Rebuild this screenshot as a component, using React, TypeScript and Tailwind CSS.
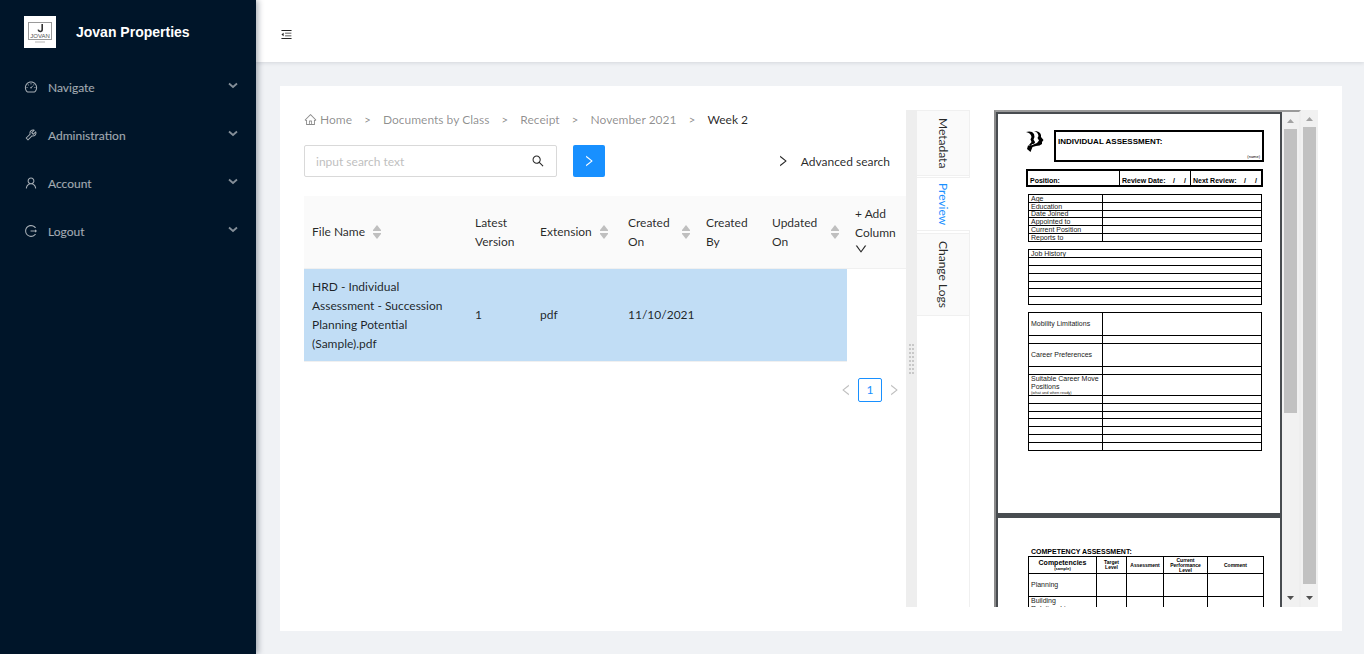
import type { ReactNode } from "react";
import {
  AiOutlineDashboard,
  AiOutlineDown,
  AiOutlineHome,
  AiOutlineLeft,
  AiOutlineLogout,
  AiOutlineMenuFold,
  AiOutlineRight,
  AiOutlineSearch,
  AiOutlineTool,
  AiOutlineUser,
} from "react-icons/ai";

const MENU = [
  { label: "Navigate", Icon: AiOutlineDashboard },
  { label: "Administration", Icon: AiOutlineTool },
  { label: "Account", Icon: AiOutlineUser },
  { label: "Logout", Icon: AiOutlineLogout },
];

const CRUMBS = ["Home", "Documents by Class", "Receipt", "November 2021", "Week 2"];

const COLUMNS = [
  { title: "File Name", width: "w-[163px]", sort: true },
  { title: "Latest Version", width: "w-[65px]", sort: false },
  { title: "Extension", width: "w-[88px]", sort: true },
  { title: "Created On", width: "w-[78px]", sort: true },
  { title: "Created By", width: "w-[66px]", sort: false },
  { title: "Updated On", width: "w-[83px]", sort: true },
];

const FILE = [
  "HRD - Individual Assessment - Succession Planning Potential (Sample).pdf",
  "1",
  "pdf",
  "11/10/2021",
  "",
  "",
];

function BrandLogo() {
  return (
    <svg viewBox="0 0 32 32" className="h-8 w-8 shrink-0 bg-white" aria-hidden="true">
      <rect x="4.5" y="6.5" width="23" height="17" fill="none" stroke="#9a9a9a" />
      <path d="M18.200 8v5.500q0 2-2 2-1.700 0-2-1.800" fill="none" stroke="#333" strokeWidth="1.6" />
      <text
        x="16"
        y="21.5"
        textAnchor="middle"
        fontSize="6"
        fill="#555"
        fontFamily="Liberation Sans, sans-serif"
      >
        JOVAN
      </text>
      <path d="M11 26h10" stroke="#b5b5b5" strokeWidth="1" />
    </svg>
  );
}

function Sidebar() {
  return (
    <aside className="z-10 w-64 shrink-0 bg-[#001529] shadow-[2px_0_6px_rgba(0,21,41,0.35)]">
      <div className="flex h-[63px] items-center gap-5 px-6">
        <BrandLogo />
        <h1 className="font-['Liberation_Sans',sans-serif] text-sm font-bold text-white">
          Jovan Properties
        </h1>
      </div>
      <nav>
        {MENU.map(({ label, Icon }) => (
          <button
            key={label}
            type="button"
            className="flex h-12 w-full items-center pr-4 pl-6 text-white/65"
          >
            <Icon className="mr-2.5 shrink-0" size={14} />
            <span>{label}</span>
            <svg viewBox="0 0 14 14" className="ml-auto h-3.5 w-3.5 opacity-80" aria-hidden="true">
              <path d="M3 3.500l4 3.500 4-3.500" fill="none" stroke="currentColor" strokeWidth="1.8" />
            </svg>
          </button>
        ))}
      </nav>
    </aside>
  );
}

function Sorter() {
  return (
    <svg viewBox="0 0 8 14" className="h-3.5 w-2 shrink-0 fill-[#bfbfbf]" aria-hidden="true">
      <path d="M4 0l4 5v1H0V5z" />
      <path d="M4 14l4-5V8H0v1z" />
    </svg>
  );
}

function Breadcrumb() {
  return (
    <nav aria-label="Breadcrumb">
      <ol className="flex gap-3 text-black/45">
        {CRUMBS.map((crumb, i) => (
          <li key={crumb} className="flex items-center gap-3">
            {i > 0 && <span>&gt;</span>}
            {i === CRUMBS.length - 1 ? (
              <span className="text-black/85">{crumb}</span>
            ) : (
              <a href="#" className="flex items-center gap-[3px]">
                {i === 0 && <AiOutlineHome size={13} />}
                {crumb}
              </a>
            )}
          </li>
        ))}
      </ol>
    </nav>
  );
}

function SearchBar() {
  return (
    <div className="mt-4 flex items-center">
      <label className="flex h-8 w-[253px] items-center rounded-[2px] border border-[#d9d9d9] px-[11px]">
        <input
          type="text"
          aria-label="Search documents"
          placeholder="input search text"
          className="min-w-0 flex-1 outline-none placeholder:text-[#bfbfbf]"
        />
        <AiOutlineSearch size={14} />
      </label>
      <button
        type="button"
        aria-label="Search"
        className="ml-4 flex h-8 w-8 items-center justify-center rounded-[2px] bg-[#1890ff] text-white"
      >
        <AiOutlineRight size={14} />
      </button>
      <button type="button" className="mr-4 ml-auto flex items-center gap-[11px]">
        <AiOutlineRight size={14} />
        Advanced search
      </button>
    </div>
  );
}

function FileTable() {
  return (
    <table className="mt-[19px] w-full table-fixed text-left">
      <colgroup>
        {COLUMNS.map((c) => (
          <col key={c.title} className={c.width} />
        ))}
        <col className="w-[59px]" />
      </colgroup>
      <thead className="bg-[#fafafa]">
        <tr className="h-[72px] border-b border-[#f0f0f0]">
          {COLUMNS.map((c) => (
            <th key={c.title} className="px-2 font-normal">
              <span className="flex items-center gap-2">
                {c.title}
                {c.sort && <Sorter />}
              </span>
            </th>
          ))}
          <th className="pl-2 font-normal">
            <button type="button" className="text-left">
              + Add Column
              <AiOutlineDown size={14} className="-ml-px mb-1" />
            </button>
          </th>
        </tr>
      </thead>
      <tbody>
        <tr>
          {FILE.map((value, i) => (
            <td key={i} className="border-b border-[#f0f0f0] bg-[#c1ddf5] px-2 py-2">
              {value}
            </td>
          ))}
          <td />
        </tr>
      </tbody>
    </table>
  );
}

function Pagination() {
  return (
    <div className="mt-4 flex justify-end text-[#bfbfbf]">
      <button type="button" aria-label="Previous page" className="flex h-6 w-6 items-center justify-center">
        <AiOutlineLeft size={14} />
      </button>
      <button
        type="button"
        className="h-6 w-6 rounded-[2px] border border-[#1890ff] text-center text-[#1890ff]"
      >
        1
      </button>
      <button type="button" aria-label="Next page" className="flex h-6 w-6 items-center justify-center">
        <AiOutlineRight size={14} />
      </button>
    </div>
  );
}

function Splitter() {
  return (
    <div className="flex w-[11px] shrink-0 items-center justify-center bg-[#eeeeee]">
      <div className="grid grid-cols-2 gap-x-px gap-y-0.5">
        {Array.from({ length: 16 }, (_, i) => (
          <span key={i} className="h-0.5 w-0.5 bg-[#c8c8c8]" />
        ))}
      </div>
    </div>
  );
}

function DetailTabs() {
  const tab =
    "flex w-full items-center justify-center border-y border-r border-[#f0f0f0] bg-[#fafafa]";
  return (
    <div role="tablist" className="flex w-[53px] shrink-0 flex-col">
      <button type="button" role="tab" className={`${tab} h-[66px]`}>
        <span className="whitespace-nowrap [writing-mode:vertical-rl]">Metadata</span>
      </button>
      <div className="h-px border-r border-[#f0f0f0]" />
      <button
        type="button"
        role="tab"
        aria-selected="true"
        className="flex h-[54px] w-full items-center justify-center border-y border-[#f0f0f0] text-[#1890ff]"
      >
        <span className="whitespace-nowrap [writing-mode:vertical-rl]">Preview</span>
      </button>
      <div className="h-0.5 border-r border-[#f0f0f0]" />
      <button type="button" role="tab" className={`${tab} h-[83px]`}>
        <span className="whitespace-nowrap [writing-mode:vertical-rl]">Change Logs</span>
      </button>
      <div className="flex-1 border-r border-[#f0f0f0]" />
    </div>
  );
}

function Scrollbar({ thumb }: { thumb: string }) {
  return (
    <div className="flex w-[17px] shrink-0 flex-col items-center bg-[#f1f1f1]">
      <svg viewBox="0 0 17 17" className="h-[17px] w-[17px] shrink-0 fill-[#a3a3a3]" aria-hidden="true">
        <path d="M5 11l3.500-4 3.500 4z" />
      </svg>
      <div className="w-[13px] flex-1">
        <div className={`bg-[#c1c1c1] ${thumb}`} />
      </div>
      <svg viewBox="0 0 17 17" className="h-[17px] w-[17px] shrink-0 fill-[#505050]" aria-hidden="true">
        <path d="M5 6h7l-3.500 4z" />
      </svg>
    </div>
  );
}

function SheetTable({ rows, split = true }: { rows: [string, ReactNode?][]; split?: boolean }) {
  return (
    <table className="w-[234px] table-fixed border-collapse leading-[6px]">
      <colgroup>
        <col className="w-[74px]" />
        {split && <col />}
      </colgroup>
      <tbody>
        {rows.map(([height, label], i) => (
          <tr key={i} className={height}>
            <td className="border border-black pl-0.5 align-middle">{label}</td>
            {split && <td className="border border-black" />}
          </tr>
        ))}
      </tbody>
    </table>
  );
}

function ReviewDate({ label }: { label: string }) {
  return (
    <p className="flex flex-1 items-end justify-between border-l border-black pr-1 pb-px pl-0.5">
      <span>{label}</span>
      <span className="flex gap-[9px]">
        <span>/</span>
        <span>/</span>
      </span>
    </p>
  );
}

function AssessmentPage() {
  return (
    <div className="h-[399px] shrink-0 bg-white px-[28px] pt-4">
      <div className="-mr-3 flex justify-between">
        <svg viewBox="0 0 18 22" className="mt-px h-[22px] w-[18px]" aria-hidden="true">
          <path d="M0 1Q6-.5 8 3L8.500 6 7.500 8.500 9 11Q9 13 6 13L5 15 3 14 5.500 11 4.500 8.500 5.500 6Q5 2 0 1z" />
          <path d="M8 0Q14 0 15 4L15 6 17.500 9 16 11 16 13Q14 15 10 15L6.500 16 4.500 21 1 18 2 14.500 5 14.500 11 12 13 9.500 11.500 7 12.500 5Q12 1 8 0z" />
        </svg>
        <div className="flex h-8 w-[210px] flex-col justify-between border-2 border-black px-0.5 pt-[5px] text-black">
          <p className="text-[8px] leading-[10px] font-bold whitespace-nowrap">INDIVIDUAL ASSESSMENT:</p>
          <p className="text-right text-[4px] leading-[6px]">(name)</p>
        </div>
      </div>
      <div className="mt-[7px] -mr-[11px] flex h-[18px] border-2 border-black font-bold text-black">
        <p className="flex w-[91px] items-end pb-px pl-0.5">Position:</p>
        <ReviewDate label="Review Date:" />
        <ReviewDate label="Next Review:" />
      </div>
      <div className="mt-[7px] -mr-2 ml-0.5 flex flex-col gap-[7px]">
        <SheetTable
          rows={[
            ["h-[8px]", "Age"],
            ["h-[8px]", "Education"],
            ["h-[7px]", "Date Joined"],
            ["h-[8px]", "Appointed to"],
            ["h-[8px]", "Current Position"],
            ["h-[8px]", "Reports to"],
          ]}
        />
        <SheetTable
          split={false}
          rows={[["h-[8px]", "Job History"], ["h-[8px]"], ["h-[8px]"], ["h-[8px]"], ["h-[7px]"], ["h-[8px]"], ["h-[8px]"]]}
        />
        <SheetTable
          rows={[
            ["h-[23px]", "Mobility Limitations"],
            ["h-[8px]"],
            ["h-[23px]", "Career Preferences"],
            ["h-[8px]"],
            [
              "h-[21px]",
              <>
                <span className="block leading-[8px]">Suitable Career Move Positions</span>
                <span className="block text-[4px] leading-[4px]">(what and when ready)</span>
              </>,
            ],
            ["h-[8px]"],
            ["h-[8px]"],
            ["h-[7px]"],
            ["h-[8px]"],
            ["h-[8px]"],
            ["h-[8px]"],
            ["h-[8px]"],
          ]}
        />
      </div>
    </div>
  );
}

function CompetencyPage() {
  const cell = "border border-black p-0";
  return (
    <div className="mt-[5px] h-[399px] shrink-0 bg-white pt-[30px] pl-[30px]">
      <h2 className="pl-[3px] leading-[8px] font-bold text-black">COMPETENCY ASSESSMENT:</h2>
      <table className="w-[236px] table-fixed border-collapse">
        <colgroup>
          <col className="w-[68px]" />
          <col className="w-[30px]" />
          <col className="w-[37px]" />
          <col className="w-[44px]" />
          <col />
        </colgroup>
        <thead>
          <tr className="h-[17px] text-[5px] leading-[5px] text-black">
            <th className={cell}>
              <span className="block text-[7px] leading-[8px]">Competencies</span>
              <span className="block text-[4px] leading-[4px]">(sample)</span>
            </th>
            <th className={`${cell} px-1`}>Target Level</th>
            <th className={cell}>Assessment</th>
            <th className={cell}>Current Performance Level</th>
            <th className={cell}>Comment</th>
          </tr>
        </thead>
        <tbody>
          {["Planning", "Building Relationships"].map((name, i) => (
            <tr key={name} className="h-[23px]">
              <td
                className={`border border-black pr-5 pl-0.5 leading-[8px] ${i > 0 ? "align-top" : "align-middle"}`}
              >
                {name}
              </td>
              <td className={cell} />
              <td className={cell} />
              <td className={cell} />
              <td className={cell} />
            </tr>
          ))}
        </tbody>
      </table>
    </div>
  );
}

function PdfPreview() {
  return (
    <div className="ml-6 flex min-w-0 flex-1 overflow-hidden">
      <div className="flex min-w-0 flex-1 border-t-2 border-r-2 border-l-2 border-t-[#9a9a9a] border-r-[#eeeeee] border-l-[#8a8a8a]">
        <div className="flex min-w-0 flex-1 flex-col overflow-hidden bg-[#484c50] px-0.5 pt-0.5 font-['Liberation_Sans',sans-serif] text-[7px] leading-[7px] text-[#222222]">
          <AssessmentPage />
          <CompetencyPage />
        </div>
        <Scrollbar thumb="h-[284px]" />
      </div>
      <Scrollbar thumb="h-[457px]" />
    </div>
  );
}

export default function App() {
  return (
    <div className="flex h-screen min-h-[654px] bg-[#f0f2f5] font-['Lato',sans-serif] text-[12px] leading-[19px] text-black/85">
      <Sidebar />
      <div className="flex min-w-0 flex-1 flex-col">
        <header className="flex h-[62px] shrink-0 items-center bg-white px-6 pt-1.5 shadow-[0_1px_4px_rgba(0,21,41,0.12)]">
          <button type="button" aria-label="Collapse menu">
            <AiOutlineMenuFold size={13} />
          </button>
        </header>
        <main className="mx-6 mt-6 mr-[22px] mb-[23px] flex min-h-0 flex-1 bg-white p-6">
          <section className="min-w-0 flex-1">
            <Breadcrumb />
            <SearchBar />
            <FileTable />
            <Pagination />
          </section>
          <section className="flex w-[412px] shrink-0">
            <Splitter />
            <DetailTabs />
            <PdfPreview />
          </section>
        </main>
      </div>
    </div>
  );
}
